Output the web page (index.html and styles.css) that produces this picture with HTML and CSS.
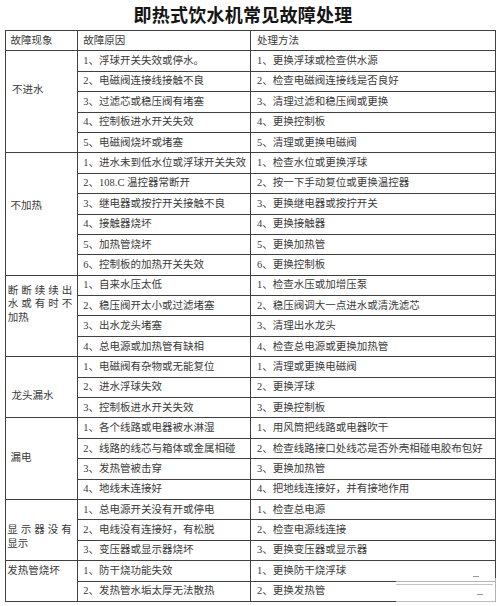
FILE: index.html
```html
<!DOCTYPE html>
<html lang="zh-CN">
<head>
<meta charset="utf-8">
<title>即热式饮水机常见故障处理</title>
<link rel="stylesheet" href="styles.css">
</head>
<body>
<div class="page">
<h1 class="title">即热式饮水机常见故障处理</h1>
<table class="faults">
<colgroup><col class="c1"><col class="c2"><col class="c3"></colgroup>
<thead>
<tr><th class="h1">故障现象</th><th>故障原因</th><th class="fix">处理方法</th></tr>
</thead>
<tbody>
<tr><td rowspan="5" class="sym s1">不进水</td><td>1、浮球开关失效或停水。</td><td class="fix">1、更换浮球或检查供水源</td></tr>
<tr><td>2、电磁阀连接线接触不良</td><td class="fix">2、检查电磁阀连接线是否良好</td></tr>
<tr><td>3、过滤芯或稳压阀有堵塞</td><td class="fix">3、清理过滤和稳压阀或更换</td></tr>
<tr><td>4、控制板进水开关失效</td><td class="fix">4、更换控制板</td></tr>
<tr><td>5、电磁阀烧坏或堵塞</td><td class="fix">5、清理或更换电磁阀</td></tr>

<tr><td rowspan="6" class="sym s2">不加热</td><td>1、进水未到低水位或浮球开关失效</td><td class="fix">1、检查水位或更换浮球</td></tr>
<tr><td>2、108.C 温控器常断开</td><td class="fix">2、按一下手动复位或更换温控器</td></tr>
<tr><td>3、继电器或按拧开关接触不良</td><td class="fix">3、更换继电器或按拧开关</td></tr>
<tr><td>4、接触器烧坏</td><td class="fix">4、更换接触器</td></tr>
<tr><td>5、加热管烧坏</td><td class="fix">5、更换加热管</td></tr>
<tr><td>6、控制板的加热开关失效</td><td class="fix">6、更换控制板</td></tr>

<tr><td rowspan="4" class="sym s3"><span class="spread">断断续续出</span><br><span class="spread">水或有时不</span><br>加热</td><td>1、自来水压太低</td><td class="fix">1、检查水压或加增压泵</td></tr>
<tr><td>2、稳压阀开太小或过滤堵塞</td><td class="fix">2、稳压阀调大一点进水或清洗滤芯</td></tr>
<tr><td>3、出水龙头堵塞</td><td class="fix">3、清理出水龙头</td></tr>
<tr><td>4、总电源或加热管有缺相</td><td class="fix">4、检查总电源或更换加热管</td></tr>

<tr><td rowspan="3" class="sym s4">龙头漏水</td><td>1、电磁阀有杂物或无能复位</td><td class="fix">1、清理或更换电磁阀</td></tr>
<tr><td>2、进水浮球失效</td><td class="fix">2、更换浮球</td></tr>
<tr><td>3、控制板进水开关失效</td><td class="fix">3、更换控制板</td></tr>

<tr><td rowspan="4" class="sym s5">漏电</td><td>1、各个线路或电器被水淋湿</td><td class="fix">1、用风筒把线路或电器吹干</td></tr>
<tr><td>2、线路的线芯与箱体或金属相碰</td><td class="fix">2、检查线路接口处线芯是否外壳相碰电胶布包好</td></tr>
<tr><td>3、发热管被击穿</td><td class="fix">3、更换加热管</td></tr>
<tr><td>4、地线未连接好</td><td class="fix">4、把地线连接好，并有接地作用</td></tr>

<tr><td rowspan="3" class="sym s6"><span class="spread">显示器没有</span><br>显示</td><td>1、总电源开关没有开或停电</td><td class="fix">1、检查总电源</td></tr>
<tr><td>2、电线没有连接好，有松脱</td><td class="fix">2、检查电源线连接</td></tr>
<tr><td>3、变压器或显示器烧坏</td><td class="fix">3、更换变压器或显示器</td></tr>

<tr><td rowspan="2" class="sym s7">发热管烧坏</td><td>1、防干烧功能失效</td><td class="fix">1、更换防干烧浮球</td></tr>
<tr><td>2、发热管水垢太厚无法散热</td><td class="fix">2、更换发热管</td></tr>
</tbody>
</table>
<div class="watermark" aria-hidden="true">
<span class="dash d1"></span>
<span class="dash d2"></span>
<span class="dash d3"></span>
<span class="dash d4"></span>
</div>
</div>
</body>
</html>
```

FILE: styles.css
```css
html, body {
  margin: 0;
  padding: 0;
  background: #ffffff;
}

.page {
  position: relative;
  width: 500px;
  height: 606px;
  overflow: hidden;
}

.title {
  margin: 0;
  height: 30px;
  line-height: 28px;
  padding-right: 14px;
  font-family: "Noto Sans CJK SC", sans-serif;
  font-size: 18px;
  font-weight: 700;
  letter-spacing: 0.25px;
  text-align: center;
  color: #151515;
}

.faults {
  margin-left: 5px;
  width: 490px;
  border-collapse: collapse;
  table-layout: fixed;
  font-family: "Liberation Serif", "Noto Sans CJK SC", serif;
  font-size: 10.5px;
  color: #3a3a3a;
}

.c1 { width: 72.3px; }
.c2 { width: 172.7px; }
.c3 { width: 245px; }

.faults tr {
  height: 20.4px;
}

.faults th,
.faults td {
  border: 1px solid #404040;
  padding: 0 0 0 5px;
  font-weight: normal;
  text-align: left;
  white-space: nowrap;
  line-height: 14px;
  vertical-align: middle;
}

.faults .fix {
  padding-left: 6px;
}

.faults .h1 {
  padding-left: 4.5px;
}

.faults .sym {
  vertical-align: top;
  line-height: 14px;
}

.faults .s1 { padding-top: 32px; padding-left: 6px; }
.faults .s2 { padding-top: 45.5px; padding-left: 4.5px; }
.faults .s3 { padding-top: 8.3px; padding-left: 1.8px; line-height: 13.3px; }
.faults .s4 { padding-top: 31.7px; padding-left: 5.5px; }
.faults .s5 { padding-top: 33px; padding-left: 4.5px; }
.faults .s6 { padding-top: 23.3px; padding-left: 1.2px; line-height: 13.3px; }
.faults .s7 { padding-top: 3px; padding-left: 1.2px; }

.spread {
  letter-spacing: 3px;
}

.watermark {
  position: absolute;
  left: 396px;
  top: 578px;
  width: 104px;
  height: 28px;
  background: rgba(255, 255, 255, 0.6);
}

.dash {
  position: absolute;
  height: 1px;
  background: #9a9a9a;
}

.d1 { left: 77px; top: -2px; width: 6px; }
.d2 { left: 0; top: 6px; width: 97px; background: #c4c4c4; }
.d3 { left: 81px; top: 16px; width: 6px; }
.d4 { left: 0; top: 23px; width: 99px; background: #bdbdbd; }
```
